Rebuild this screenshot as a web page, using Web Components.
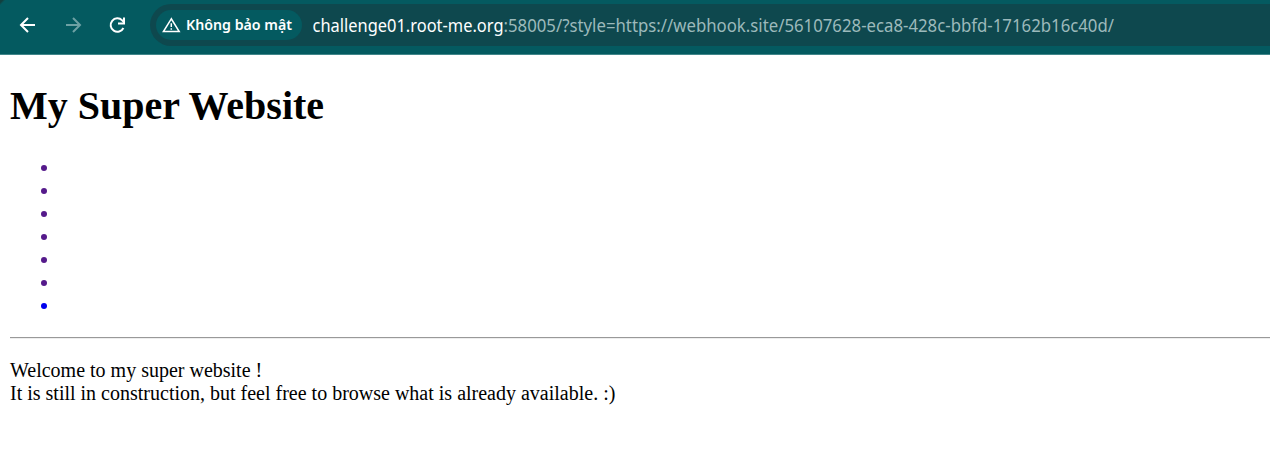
<!DOCTYPE html>
<html lang="vi">
<head>
<meta charset="utf-8">
<title>My Super Website</title>
<style>
html,body{margin:0;background:#fff;height:455px;overflow:hidden}
</style>
</head>
<body>
<browser-window>
  <browser-toolbar slot="toolbar">
    <nav-icon name="back"></nav-icon>
    <nav-icon name="forward"></nav-icon>
    <nav-icon name="reload"></nav-icon>
    <address-bar slot="address" host="challenge01.root-me.org" rest=":58005/?style=https://webhook.site/56107628-eca8-428c-bbfd-17162b16c40d/">
      <security-chip label="Không bảo mật"></security-chip>
    </address-bar>
  </browser-toolbar>
  <web-page heading="My Super Website">
    <link-bullet slot="links"></link-bullet>
    <link-bullet slot="links"></link-bullet>
    <link-bullet slot="links"></link-bullet>
    <link-bullet slot="links"></link-bullet>
    <link-bullet slot="links"></link-bullet>
    <link-bullet slot="links"></link-bullet>
    <link-bullet slot="links" unvisited></link-bullet>
    <span>Welcome to my super website !</span><br>
    <span>It is still in construction, but feel free to browse what is already available. :)</span>
  </web-page>
</browser-window>
<script>
const define = (name, render) => customElements.define(name, class extends HTMLElement {
  constructor() { super(); this.attachShadow({mode: 'open'}); }
  connectedCallback() { this.shadowRoot.innerHTML = render(this); }
});

define('browser-window', () => `
<style>:host{display:flex;flex-direction:column;width:1270px;height:455px;overflow:hidden}</style>
<slot name="toolbar"></slot><slot></slot>`);

define('browser-toolbar', () => `
<style>
:host{display:flex;height:55px;box-sizing:border-box;background:linear-gradient(135deg,#12403f 0 2px,#045a60 4px);border-bottom:1px solid #41868a}
nav{display:flex;gap:20.5px;padding:12.5px 0 0 16px;width:150px;box-sizing:border-box;flex:none}
</style><nav><slot></slot></nav><slot name="address"></slot>`);

const icons = {
  back: '<path d="M19 12H5.5M12 5l-7 7 7 7" fill="none" stroke="#fff" stroke-width="2"/>',
  forward: '<path d="M5 12h13.5M12 5l7 7-7 7" fill="none" stroke="#6da1a4" stroke-width="2"/>',
  reload: '<path d="M18.4 15A6.7 6.7 0 1 1 17.2 7.4L19 9.4" fill="none" stroke="#fff" stroke-width="2"/><path d="M19 4.5v6H13" fill="none" stroke="#fff" stroke-width="2"/>'
};
define('nav-icon', el => `
<style>:host{display:block;width:24px;height:24px;flex:none}svg{display:block}</style>
<svg width="24" height="24" viewBox="0 0 24 24">${icons[el.getAttribute('name')]}</svg>`);

define('address-bar', el => `
<style>
:host{display:flex;flex:1;height:42px;margin-top:4px;box-sizing:border-box;padding:6px 0 0 6px;background:#0e484e;border-radius:21px 0 0 21px;gap:10px}
svg{display:block;flex:none;margin-top:-6px;overflow:visible}
text{font:17.5px "Noto Sans","Open Sans",sans-serif}
</style><slot></slot>
<svg width="950" height="42"><text x="0.5" y="28" fill="#fff" textLength="191" lengthAdjust="spacingAndGlyphs">${el.getAttribute('host')}</text><text x="191.5" y="28" fill="#9cb9bb" textLength="610.5" lengthAdjust="spacingAndGlyphs">${el.getAttribute('rest')}</text></svg>`);

define('security-chip', el => `
<style>
:host{display:flex;width:146px;height:30px;border-radius:15px;background:#045a60;flex:none}
svg{display:block}
text{font:600 14.5px "Noto Sans","Open Sans",sans-serif}
</style>
<svg width="146" height="30"><path d="M15.3 8.8L7.4 21.6H23.2Z" fill="none" stroke="#fff" stroke-width="1.5"/><path d="M15.3 13.2V17M15.3 18.2V19.8" stroke="#fff" stroke-width="1.5"/><text x="30" y="20" fill="#fff" textLength="106" lengthAdjust="spacingAndGlyphs">${el.getAttribute('label')}</text></svg>`);

define('web-page', el => `
<style>
:host{display:block;padding:0 0 0 10px;font:20px/23px "Liberation Serif","Times New Roman",serif;color:#000}
h1{margin:0;padding-top:28px;font-size:40px;line-height:46px;font-weight:bold}
.links{display:flex;flex-direction:column;padding:27px 0 20px 31px}
hr{margin:0 0 20px;height:2px;border:0;background:linear-gradient(#999 50%,#eee 50%)}
p{margin:0}
</style>
<h1>${el.getAttribute('heading')}</h1>
<div class="links"><slot name="links"></slot></div>
<hr><p><slot></slot></p>`);

define('link-bullet', el => `
<style>:host{display:flex;align-items:center;height:23px}
i{width:6px;height:6px;border-radius:50%;background:${el.hasAttribute('unvisited') ? '#0000ee' : '#551a8b'}}</style><i></i>`);
</script>
</body>
</html>
